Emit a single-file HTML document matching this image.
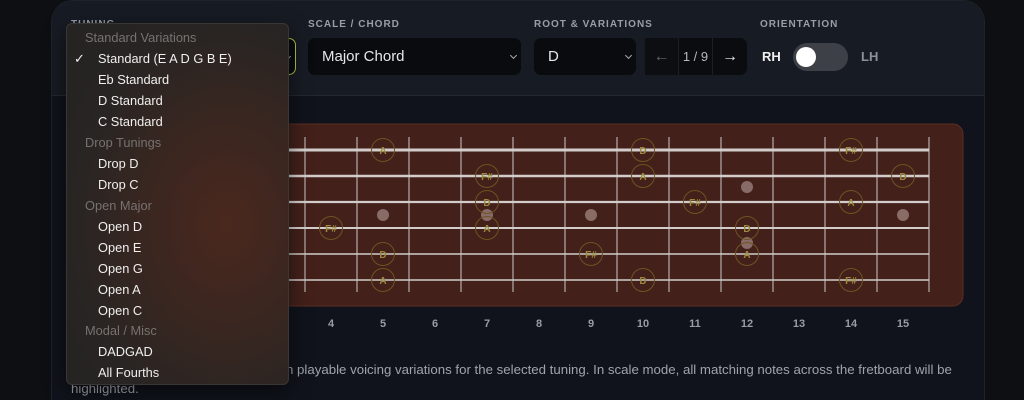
<!DOCTYPE html>
<html><head><meta charset="utf-8">
<style>
*{margin:0;padding:0;box-sizing:border-box}
html,body{width:1024px;height:400px;overflow:hidden}
body{background:#0d0f13;font-family:"Liberation Sans",sans-serif;position:relative}
.panel{position:absolute;left:51px;top:0;width:934px;height:401px;background:#10131b;border-radius:22px 22px 0 0;border:1px solid #1e222b;border-bottom:none;overflow:hidden}
.head{position:absolute;left:0;top:0;width:100%;height:95px;background:#171b23;border-bottom:1px solid #242832}
.lbl{position:absolute;top:19px;font-size:10px;font-weight:bold;letter-spacing:1px;color:#9a9ea8}
.sel{position:absolute;top:38px;height:37px;background:#090b0f;border-radius:7px;color:#e6e7ea;font-size:15px;line-height:37px;padding-left:14px}
.chev{position:absolute;right:6px;top:15px;width:5px;height:5px;border-right:1px solid #aaa;border-bottom:1px solid #aaa;transform:rotate(45deg)}
.dd{position:absolute;left:66px;top:23px;width:223px;height:362px;border-radius:6px;border:1px solid #3a3634;background:radial-gradient(ellipse 180px 230px at 160px 200px,#4a281e 0%,#3a2620 45%,#2a2523 80%,#262423 100%);box-shadow:0 6px 20px rgba(0,0,0,.5)}
.dd div{position:absolute;font-size:12.8px;color:#f0efee;left:31px}
.dd div.h{left:18px;color:#77726f}
.fn{position:absolute;top:318px;font-size:11px;font-weight:bold;color:#9a9ca4;width:20px;text-align:center}
</style></head><body>
<div class="panel"><div class="head"></div></div>
<div class="lbl" style="left:71px">TUNING</div>
<div class="lbl" style="left:308px">SCALE / CHORD</div>
<div class="lbl" style="left:534px">ROOT &amp; VARIATIONS</div>
<div class="lbl" style="left:760px">ORIENTATION</div>
<div class="sel" style="left:180px;width:116px;border:1px solid #b5c23a"><span class="chev" style="right:5px"></span></div>
<div class="sel" style="left:308px;width:213px">Major Chord<span class="chev" style="right:5px"></span></div>
<div class="sel" style="left:534px;width:102px">D<span class="chev" style="right:5px"></span></div>
<div class="sel" style="left:645px;width:102px;padding:0;background:#0a0c10">
 <div style="position:absolute;left:0;top:0;width:33px;height:37px;background:#0c0e12;text-align:center;color:#666;font-size:16px">←</div>
 <div style="position:absolute;left:33px;top:0;width:35px;height:37px;border-left:1px solid #1c1f26;border-right:1px solid #1c1f26;text-align:center;color:#b8bac0;font-size:13px">1 / 9</div>
 <div style="position:absolute;left:68px;top:0;width:34px;height:37px;text-align:center;color:#f0f0f0;font-size:16px;font-weight:bold">→</div>
</div>
<div style="position:absolute;left:762px;top:49px;font-size:13px;font-weight:bold;color:#f0f0f0">RH</div>
<div style="position:absolute;left:793px;top:43px;width:55px;height:28px;border-radius:14px;background:#3e4048"><div style="position:absolute;left:3px;top:4px;width:20px;height:20px;border-radius:50%;background:#fff"></div></div>
<div style="position:absolute;left:861px;top:49px;font-size:13px;font-weight:bold;color:#8d9098">LH</div>

<svg style="position:absolute;left:0;top:0" width="1024" height="400">
<rect x="260" y="124" width="703" height="182" rx="10" fill="#43201a" stroke="#5a2e22"/>
<g stroke="#c9c4c2" stroke-width="1.3" opacity="0.8">
<line x1="305" y1="137" x2="305" y2="292"/><line x1="357" y1="137" x2="357" y2="292"/><line x1="409" y1="137" x2="409" y2="292"/><line x1="461" y1="137" x2="461" y2="292"/><line x1="513" y1="137" x2="513" y2="292"/><line x1="565" y1="137" x2="565" y2="292"/><line x1="617" y1="137" x2="617" y2="292"/><line x1="669" y1="137" x2="669" y2="292"/><line x1="721" y1="137" x2="721" y2="292"/><line x1="773" y1="137" x2="773" y2="292"/><line x1="825" y1="137" x2="825" y2="292"/><line x1="877" y1="137" x2="877" y2="292"/><line x1="929" y1="137" x2="929" y2="292"/>
</g>
<g stroke="#d2cdcb">
<line x1="260" y1="150" x2="929" y2="150" stroke-width="3"/><line x1="260" y1="176" x2="929" y2="176" stroke-width="2.6"/><line x1="260" y1="202" x2="929" y2="202" stroke-width="2.2"/><line x1="260" y1="228" x2="929" y2="228" stroke-width="1.9"/><line x1="260" y1="254" x2="929" y2="254" stroke-width="1.6"/><line x1="260" y1="280" x2="929" y2="280" stroke-width="1.4"/>
</g>
<g fill="#a08580" opacity="0.75">
<circle cx="383" cy="215" r="6"/><circle cx="487" cy="215" r="6"/><circle cx="591" cy="215" r="6"/><circle cx="903" cy="215" r="6"/><circle cx="747" cy="187" r="6"/><circle cx="747" cy="243" r="6"/>
</g>
<g fill="none" stroke="#6e5422" stroke-width="1">
<circle cx="383" cy="150" r="11.5"/><circle cx="643" cy="150" r="11.5"/><circle cx="851" cy="150" r="11.5"/>
<circle cx="487" cy="176" r="11.5"/><circle cx="643" cy="176" r="11.5"/><circle cx="903" cy="176" r="11.5"/>
<circle cx="487" cy="202" r="11.5"/><circle cx="695" cy="202" r="11.5"/><circle cx="851" cy="202" r="11.5"/>
<circle cx="331" cy="228" r="11.5"/><circle cx="487" cy="228" r="11.5"/><circle cx="747" cy="228" r="11.5"/>
<circle cx="383" cy="254" r="11.5"/><circle cx="591" cy="254" r="11.5"/><circle cx="747" cy="254" r="11.5"/>
<circle cx="383" cy="280" r="11.5"/><circle cx="643" cy="280" r="11.5"/><circle cx="851" cy="280" r="11.5"/>
</g>
<g fill="#9c8a3c" font-size="10" font-weight="bold" font-family="Liberation Sans" text-anchor="middle">
<text x="383" y="154">A</text><text x="643" y="154">D</text><text x="851" y="154">F#</text>
<text x="487" y="180">F#</text><text x="643" y="180">A</text><text x="903" y="180">D</text>
<text x="487" y="206">D</text><text x="695" y="206">F#</text><text x="851" y="206">A</text>
<text x="331" y="232">F#</text><text x="487" y="232">A</text><text x="747" y="232">D</text>
<text x="383" y="258">D</text><text x="591" y="258">F#</text><text x="747" y="258">A</text>
<text x="383" y="284">A</text><text x="643" y="284">D</text><text x="851" y="284">F#</text>
</g>
</svg>

<div class="fn" style="left:321px">4</div><div class="fn" style="left:373px">5</div><div class="fn" style="left:425px">6</div><div class="fn" style="left:477px">7</div><div class="fn" style="left:529px">8</div><div class="fn" style="left:581px">9</div><div class="fn" style="left:633px">10</div><div class="fn" style="left:685px">11</div><div class="fn" style="left:737px">12</div><div class="fn" style="left:789px">13</div><div class="fn" style="left:841px">14</div><div class="fn" style="left:893px">15</div>

<div style="position:absolute;left:286px;top:362px;font-size:13.25px;color:#a0a3ab;white-space:nowrap">n playable voicing variations for the selected tuning. In scale mode, all matching notes across the fretboard will be</div>
<div style="position:absolute;left:71px;top:381px;font-size:13.25px;color:#a0a3ab">highlighted.</div>

<div class="dd">
<div class="h" style="top:6px">Standard Variations</div>
<div style="top:27px;left:7px">✓</div>
<div style="top:27px">Standard (E A D G B E)</div>
<div style="top:48px">Eb Standard</div>
<div style="top:69px">D Standard</div>
<div style="top:90px">C Standard</div>
<div class="h" style="top:111px">Drop Tunings</div>
<div style="top:132px">Drop D</div>
<div style="top:153px">Drop C</div>
<div class="h" style="top:174px">Open Major</div>
<div style="top:195px">Open D</div>
<div style="top:216px">Open E</div>
<div style="top:237px">Open G</div>
<div style="top:258px">Open A</div>
<div style="top:279px">Open C</div>
<div class="h" style="top:299px">Modal / Misc</div>
<div style="top:320px">DADGAD</div>
<div style="top:341px">All Fourths</div>
</div>
</body></html>
